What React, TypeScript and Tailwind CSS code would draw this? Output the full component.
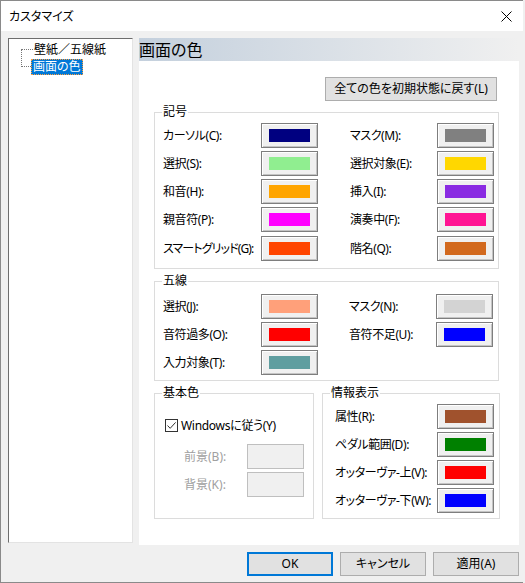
import React from "react";

const FONT = "font-['Noto_Sans','Noto_Sans_CJK_JP',sans-serif] [font-feature-settings:'palt']";

type Item = { label: string; sw: string; tight?: boolean };

const kigouL: Item[] = [
  { label: "カーソル(C):", sw: "bg-[#000080]" },
  { label: "選択(S):", sw: "bg-[#90ee90]" },
  { label: "和音(H):", sw: "bg-[#ffa500]" },
  { label: "親音符(P):", sw: "bg-[#ff00ff]" },
  { label: "スマートグリッド(G):", sw: "bg-[#ff4500]", tight: true },
];
const kigouR: Item[] = [
  { label: "マスク(M):", sw: "bg-[#808080]" },
  { label: "選択対象(E):", sw: "bg-[#ffd700]" },
  { label: "挿入(I):", sw: "bg-[#8a2be2]" },
  { label: "演奏中(F):", sw: "bg-[#ff1493]" },
  { label: "階名(Q):", sw: "bg-[#d2691e]" },
];
const gosenL: Item[] = [
  { label: "選択(J):", sw: "bg-[#ffa07a]" },
  { label: "音符過多(O):", sw: "bg-[#ff0000]" },
  { label: "入力対象(T):", sw: "bg-[#5f9ea0]" },
];
const gosenR: Item[] = [
  { label: "マスク(N):", sw: "bg-[#d3d3d3]" },
  { label: "音符不足(U):", sw: "bg-[#0000ff]" },
];
const info: Item[] = [
  { label: "属性(R):", sw: "bg-[#a0522d]" },
  { label: "ペダル範囲(D):", sw: "bg-[#008000]" },
  { label: "オッターヴァ-上(V):", sw: "bg-[#ff0000]" },
  { label: "オッターヴァ-下(W):", sw: "bg-[#0000ff]" },
];

function ColorBtn({ sw, disabled }: { sw?: string; disabled?: boolean }) {
  return (
    <div
      className={`w-[57px] h-[25px] shrink-0 border bg-[#f0f0f0] flex items-center justify-center ${
        disabled
          ? "border-[#bfbfbf]"
          : "border-[#7e7e7e] shadow-[inset_1px_1px_0_#ffffff,inset_-1px_-1px_0_#c4c4c4]"
      }`}
    >
      {sw && <div className={`w-[41px] h-[13px] ${sw}`} />}
    </div>
  );
}

function Group({ title, className, children }: { title: string; className?: string; children: React.ReactNode }) {
  return (
    <div className={`relative border border-[#dcdcdc] ${className ?? ""}`}>
      <span className="absolute -top-[9px] left-[7px] bg-white px-[1px] leading-[16px] text-[12px]">{title}</span>
      {children}
    </div>
  );
}

function Row({ it, lw }: { it: Item; lw: string }) {
  return (
    <div className="flex items-center h-[25px]">
      <span
        className={`${lw} shrink-0 text-[12px] leading-none whitespace-nowrap ${
          it.tight ? "tracking-[-0.9px]" : "tracking-[-0.4px]"
        }`}
      >
        {it.label}
      </span>
      <ColorBtn sw={it.sw} />
    </div>
  );
}

function Btn({ children, primary }: { children: React.ReactNode; primary?: boolean }) {
  return (
    <div
      className={`w-[86px] h-[24px] flex items-center justify-center bg-[#e1e1e1] text-[12px] ${
        primary ? "border-2 border-[#0078d7]" : "border border-[#adadad]"
      }`}
    >
      {children}
    </div>
  );
}

export default function App() {
  return (
    <div className={`w-[525px] h-[583px] bg-[#f0f0f0] text-black overflow-hidden ${FONT}`}>
      <div className="w-[523px] h-[583px] flex flex-col border-l border-t border-b border-[#8a8a8a] bg-[#f0f0f0]">
        {/* title bar */}
        <div className="h-[30px] bg-white flex items-center justify-between pl-[8px] pr-[10px] shrink-0">
          <span className="text-[12px] mt-[2px]">カスタマイズ</span>
          <svg width="11" height="11" viewBox="0 0 11 11" className="mr-[1px]">
            <path d="M0.5 0.5 L10.5 10.5 M10.5 0.5 L0.5 10.5" stroke="#000" strokeWidth="1" />
          </svg>
        </div>

        {/* body */}
        <div className="flex pl-[7px] pt-[7px] gap-[6px]">
          {/* tree */}
          <div className="w-[125px] h-[505px] bg-white border-t border-l border-[#6d6d6d] border-b border-r border-b-[#e3e3e3] border-r-[#e3e3e3] relative">
            <div className="pt-[2px]">
              <div className="flex items-center h-[17px]">
                <div className="w-[12px] ml-[12px] h-px border-t border-dotted border-[#777]" />
                <span className="ml-[1px] text-[12px]">壁紙／五線紙</span>
              </div>
              <div className="flex items-center h-[17px] relative">
                <div className="absolute left-[12px] top-[-8px] h-[17px] border-l border-dotted border-[#777]" />
                <div className="w-[10px] ml-[12px] h-px border-t border-dotted border-[#777]" />
                <span className="bg-[#0078d7] text-white text-[12px] px-[1px] h-[16px] leading-[14px] border border-dotted border-[#ff9f40]">
                  画面の色
                </span>
              </div>
            </div>
          </div>

          {/* right panel */}
          <div className="w-[380px] h-[507px] bg-white flex flex-col">
            <div className="h-[23px] bg-linear-to-r from-[#c4d0dd] to-[#f0f0f0] flex items-center">
              <span className="text-[16px] leading-none">画面の色</span>
            </div>

            <div className="flex justify-end pr-[22px] mt-[16px]">
              <div className="w-[172px] h-[24px] border border-[#adadad] bg-[#e1e1e1] flex items-center justify-center text-[12px]">
                全ての色を初期状態に戻す(L)
              </div>
            </div>

            <Group title="記号" className="ml-[15px] w-[345px] mt-[11px] pt-[10px] pb-[7px] pl-[8px]">
              <div className="flex">
                <div className="flex flex-col gap-[3px]">
                  {kigouL.map((it, i) => (
                    <div key={it.label} className={i === 4 ? "mt-[1px]" : ""}>
                      <Row it={it} lw="w-[98px]" />
                    </div>
                  ))}
                </div>
                <div className="flex flex-col gap-[3px] ml-[32px]">
                  {kigouR.map((it, i) => (
                    <div key={it.label} className={i === 4 ? "mt-[1px]" : ""}>
                      <Row it={it} lw="w-[87px]" />
                    </div>
                  ))}
                </div>
              </div>
            </Group>

            <Group title="五線" className="ml-[15px] w-[345px] mt-[12px] pt-[12px] pb-[5px] pl-[8px]">
              <div className="flex">
                <div className="flex flex-col gap-[3px]">
                  {gosenL.map((it) => (
                    <Row key={it.label} it={it} lw="w-[98px]" />
                  ))}
                </div>
                <div className="flex flex-col gap-[3px] ml-[31px]">
                  {gosenR.map((it) => (
                    <Row key={it.label} it={it} lw="w-[87px]" />
                  ))}
                </div>
              </div>
            </Group>

            <div className="flex ml-[15px] mt-[12px] gap-[8px]">
              <Group title="基本色" className="w-[160px] h-[126px] pl-[10px] pt-[25px]">
                <div className="flex items-center gap-[3px] h-[13px]">
                  <div className="w-[13px] h-[13px] border border-[#333] flex items-center justify-center">
                    <svg width="11" height="11" viewBox="0 0 11 11">
                      <path d="M1.5 5.5 L4.2 8.3 L9.6 2.4" stroke="#333" strokeWidth="1" fill="none" />
                    </svg>
                  </div>
                  <span className="text-[12px] leading-none tracking-[-0.3px]">Windowsに従う(Y)</span>
                </div>
                <div className="flex flex-col gap-[3px] mt-[12px] pl-[19px]">
                  <div className="flex items-center h-[25px]">
                    <span className="w-[63px] text-[12px] text-[#a0a0a0]">前景(B):</span>
                    <ColorBtn disabled />
                  </div>
                  <div className="flex items-center h-[25px]">
                    <span className="w-[63px] text-[12px] text-[#a0a0a0]">背景(K):</span>
                    <ColorBtn disabled />
                  </div>
                </div>
              </Group>

              <Group title="情報表示" className="w-[178px] h-[126px] pl-[12px] pt-[10px]">
                <div className="flex flex-col gap-[3px]">
                  {info.map((it) => (
                    <Row key={it.label} it={it} lw="w-[102px]" />
                  ))}
                </div>
              </Group>
            </div>
          </div>
        </div>

        {/* footer buttons */}
        <div className="flex gap-[7px] pl-[246px] mt-[7px]">
          <Btn primary>OK</Btn>
          <Btn>キャンセル</Btn>
          <Btn>適用(A)</Btn>
        </div>
      </div>
    </div>
  );
}
